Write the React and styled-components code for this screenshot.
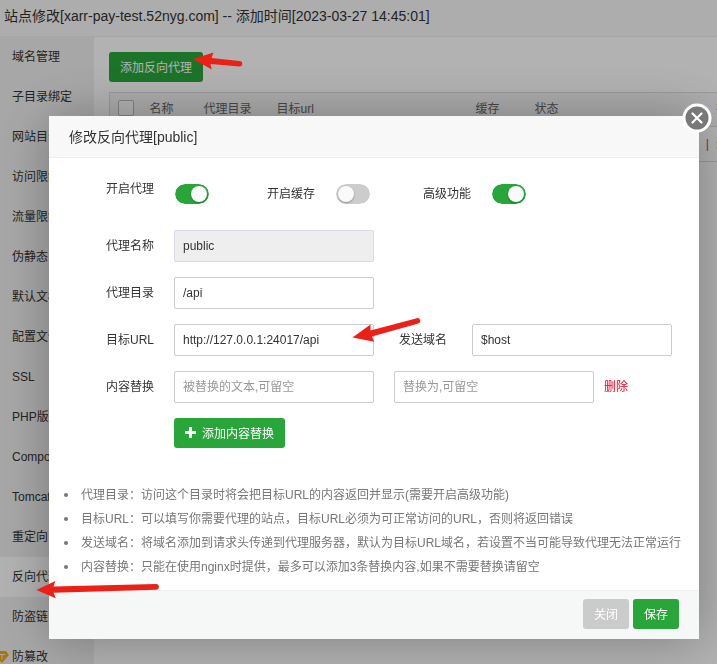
import React, { useState } from 'react';
import styled, { createGlobalStyle } from 'styled-components';

const menuItems = [
  '域名管理',
  '子目录绑定',
  '网站目录',
  '访问限制',
  '流量限制',
  '伪静态',
  '默认文档',
  '配置文件',
  'SSL',
  'PHP版本',
  'Composer',
  'Tomcat',
  '重定向',
  '反向代理',
  '防盗链',
  '防篡改',
];

const notes = [
  '代理目录：访问这个目录时将会把目标URL的内容返回并显示(需要开启高级功能)',
  '目标URL：可以填写你需要代理的站点，目标URL必须为可正常访问的URL，否则将返回错误',
  '发送域名：将域名添加到请求头传递到代理服务器，默认为目标URL域名，若设置不当可能导致代理无法正常运行',
  '内容替换：只能在使用nginx时提供，最多可以添加3条替换内容,如果不需要替换请留空',
];

function Sidebar() {
  return (
    <Menu>
      {menuItems.map((item) => (
        <MenuLink key={item} href="#site" $active={item === '反向代理'}>
          {item === '防篡改' && (
            <ProIcon viewBox="0 0 14 12" aria-hidden="true">
              <path d="M3 0h8l3 4-7 8-7-8z" fill="#f7a90a" />
              <path d="M4 3.500h6M7 3.500v5" fill="none" stroke="#f0f0f0" strokeWidth="1" />
            </ProIcon>
          )}
          {item}
        </MenuLink>
      ))}
    </Menu>
  );
}

function ProxyTable() {
  return (
    <TableWrap>
      <Table>
        <colgroup>
          <col width="32" />
          <col width="54" />
          <col width="73" />
          <col width="199" />
          <col width="59" />
          <col width="60" />
          <col />
        </colgroup>
        <thead>
          <tr>
            <th><RowCheck type="checkbox" aria-label="全选" /></th>
            <th>名称</th>
            <th>代理目录</th>
            <th>目标url</th>
            <th>缓存</th>
            <th>状态</th>
            <th>操作</th>
          </tr>
        </thead>
        <tbody>
          <tr>
            <td><RowCheck type="checkbox" aria-label="public" /></td>
            <td>public</td>
            <td>/api</td>
            <td>http://127.0.0.1:24017/api</td>
            <td>已关闭</td>
            <td>运行中</td>
            <td>
              <RowActions>
                <a href="#edit">编辑</a>
                <span>|</span>
                <a href="#delete">删除</a>
              </RowActions>
            </td>
          </tr>
        </tbody>
      </Table>
    </TableWrap>
  );
}

function ProxyDialog() {
  const [enabled, setEnabled] = useState(true);
  const [cache, setCache] = useState(false);
  const [advanced, setAdvanced] = useState(true);

  return (
    <Dialog role="dialog" aria-labelledby="dialog-title">
      <DialogTitle id="dialog-title">修改反向代理[public]</DialogTitle>
      <CloseButton type="button" aria-label="关闭窗口">
        <svg viewBox="0 0 30 30" width="30" height="30">
          <circle cx="15" cy="15" r="13" fill="#787878" stroke="#fff" strokeWidth="3" />
          <path d="M10.500 10.500l9 9M19.500 10.500l-9 9" stroke="#fff" strokeWidth="2.200" strokeLinecap="round" />
        </svg>
      </CloseButton>

      <Form>
        <SwitchRow>
          <FirstLabel htmlFor="enabled">开启代理</FirstLabel>
          <Switch id="enabled" type="checkbox" checked={enabled} onChange={() => setEnabled(!enabled)} />
          <SwitchLabel htmlFor="cache" $before={57}>开启缓存</SwitchLabel>
          <Switch id="cache" type="checkbox" checked={cache} onChange={() => setCache(!cache)} />
          <SwitchLabel htmlFor="advanced" $before={52}>高级功能</SwitchLabel>
          <Switch id="advanced" type="checkbox" checked={advanced} onChange={() => setAdvanced(!advanced)} />
        </SwitchRow>
        <Row>
          <Label htmlFor="name">代理名称</Label>
          <Input id="name" defaultValue="public" disabled />
        </Row>
        <Row>
          <Label htmlFor="dir">代理目录</Label>
          <Input id="dir" defaultValue="/api" />
        </Row>
        <Row>
          <Label htmlFor="target">目标URL</Label>
          <Input id="target" defaultValue="http://127.0.0.1:24017/api" />
          <HostLabel htmlFor="host">发送域名</HostLabel>
          <Input id="host" defaultValue="$host" />
        </Row>
        <Row>
          <Label htmlFor="sub-from">内容替换</Label>
          <ReplaceFields>
            <Input id="sub-from" placeholder="被替换的文本,可留空" />
            <Input aria-label="替换为" placeholder="替换为,可留空" />
          </ReplaceFields>
          <RemoveLink href="#remove">删除</RemoveLink>
        </Row>
        <AddRow>
          <Button type="button">
            <svg viewBox="0 0 11 11" width="11" height="11" aria-hidden="true">
              <path d="M5.500 0v11M0 5.500h11" stroke="#fff" strokeWidth="3" />
            </svg>
            添加内容替换
          </Button>
        </AddRow>
      </Form>

      <Notes>
        {notes.map((note) => <li key={note}>{note}</li>)}
      </Notes>

      <DialogFooter>
        <Button type="button" $muted>关闭</Button>
        <Button type="button">保存</Button>
      </DialogFooter>
    </Dialog>
  );
}

export default function App() {
  return (
    <>
      <GlobalStyle />
      <Page>
        <TitleBar>站点修改[xarr-pay-test.52nyg.com] -- 添加时间[2023-03-27 14:45:01]</TitleBar>
        <Content>
          <Sidebar />
          <Main>
            <Button type="button">添加反向代理</Button>
            <ProxyTable />
          </Main>
        </Content>
      </Page>
      <Shade>
        <ProxyDialog />
      </Shade>
      <Arrows viewBox="0 0 717 664" width="717" height="664" aria-hidden="true">
        <path d="M193 59 213.500 52.500 211.500 58 239.500 61A2.600 2.600 0 0 1 239.500 66.500L210.500 64 211.700 69.500z" />
        <path d="M352.500 337.500 370.500 324.500 370.500 330.500 416.800 318.200A2.600 2.600 0 0 1 418.300 323.400L372 336.500 374 341.800z" />
        <path d="M36.300 590 55.300 581 53.500 586.500 156 584A2.800 2.800 0 0 1 156 589.700L53.500 592.800 55.800 598.200z" />
      </Arrows>
    </>
  );
}

const GlobalStyle = createGlobalStyle`
  * {
    box-sizing: border-box;
  }

  body {
    margin: 0;
    overflow: hidden;
  }

  body, button, input {
    color: #333;
    font-family: "Liberation Sans", "Noto Sans CJK SC", sans-serif;
    font-size: 12px;
  }
`;

const Page = styled.div`
  display: flex;
  flex-direction: column;
  height: 100vh;
  overflow: hidden;
  background: #fff;
`;

const TitleBar = styled.header`
  flex: none;
  padding: 0 4px 3px;
  border-bottom: 1px solid #eee;
  background: #f8f8f8;
  font-size: 14px;
  line-height: 33px;
  white-space: nowrap;
`;

const Content = styled.div`
  display: flex;
  flex: 1;
  min-height: 0;
`;

const Menu = styled.nav`
  flex: none;
  width: 94px;
  overflow: hidden;
  background: #f0f0f0;
`;

const MenuLink = styled.a`
  position: relative;
  display: block;
  padding-left: 12px;
  background: ${({ $active }) => ($active ? '#fff' : 'transparent')};
  color: #333;
  line-height: 40px;
  text-decoration: none;
  white-space: nowrap;
`;

const ProIcon = styled.svg`
  position: absolute;
  top: 14px;
  left: -5px;
  width: 14px;
  height: 12px;
`;

const Main = styled.main`
  flex: 1;
  min-width: 0;
  padding: 15px 0 0 15px;
`;

const Button = styled.button`
  display: inline-flex;
  align-items: center;
  gap: 6px;
  height: 30px;
  padding: 0 11px 2px;
  border: 0;
  border-radius: 3px;
  background: ${({ $muted }) => ($muted ? '#cbcbcb' : '#29a63a')};
  color: #fff;
  cursor: pointer;
`;

const TableWrap = styled.div`
  margin-top: 10px;
  overflow: hidden;
`;

const Table = styled.table`
  width: 100%;
  min-width: 640px;
  border: 1px solid #ddd;
  border-collapse: collapse;
  table-layout: fixed;
  color: #666;

  th, td {
    height: 35px;
    padding: 0 8px;
    border-bottom: 1px solid #ddd;
    font-weight: normal;
    text-align: left;
    white-space: nowrap;
    overflow: hidden;
  }

  th {
    height: 34px;
    padding-bottom: 4px;
    background: #f6f6f6;
  }

  th:last-child {
    text-align: right;
  }

  a {
    color: #20a53a;
    text-decoration: none;
  }
`;

const RowActions = styled.div`
  display: flex;
  justify-content: flex-end;
  gap: 7px;
  line-height: 16px;
`;

const RowCheck = styled.input`
  display: block;
  appearance: none;
  width: 16px;
  height: 16px;
  margin: 0;
  border: 1px solid #bbb;
  border-radius: 2px;
  background: #fff;
`;

const Shade = styled.div`
  position: fixed;
  inset: 0;
  display: flex;
  align-items: flex-start;
  padding: 116px 18px 25px 49px;
  background: rgba(0, 0, 0, 0.3);
`;

const Dialog = styled.section`
  position: relative;
  flex: 1;
  min-width: 0;
  background: #fff;
  box-shadow: 1px 1px 50px rgba(0, 0, 0, 0.3);
`;

const DialogTitle = styled.h2`
  margin: 0;
  padding: 1px 20px 0;
  border-bottom: 1px solid #eee;
  background: #f8f8f8;
  font-size: 14px;
  font-weight: normal;
  line-height: 40px;
`;

const CloseButton = styled.button`
  position: absolute;
  top: -13px;
  right: -13px;
  width: 30px;
  height: 30px;
  padding: 0;
  border: 0;
  background: none;
  cursor: pointer;

  svg {
    display: block;
  }
`;

const Form = styled.form`
  display: flex;
  flex-direction: column;
  gap: 15px;
  padding-top: 20px;
`;

const Row = styled.div`
  display: flex;
  align-items: center;
  min-height: 32px;

  label, a {
    line-height: 20px;
  }
`;

const SwitchRow = styled(Row)`
  margin-bottom: 5px;
`;

const Label = styled.label`
  flex: none;
  width: 105px;
  margin-right: 20px;
  text-align: right;
`;

const FirstLabel = styled(Label)`
  align-self: flex-start;
  padding-top: 1px;
`;

const SwitchLabel = styled.label`
  margin-right: 20px;
  margin-left: ${({ $before }) => $before}px;
`;

const HostLabel = styled.label`
  margin: 0 25px;
`;

const Switch = styled.input`
  appearance: none;
  width: 36px;
  height: 22px;
  margin: 0;
  padding: 2px;
  border: 1px solid #fff;
  border-radius: 11px;
  background: ${({ checked }) => (checked ? '#29a63a' : '#ccc')};
  background-clip: padding-box;
  cursor: pointer;

  &::before {
    display: block;
    width: 16px;
    height: 16px;
    margin-left: ${({ checked }) => (checked ? 'auto' : '0')};
    border-radius: 50%;
    background: #fafafa;
    box-shadow: 0 1px 2px rgba(0, 0, 0, 0.3);
    content: "";
  }
`;

const Input = styled.input`
  width: 200px;
  height: 32px;
  padding: 0 8px;
  border: 1px solid #ccc;
  border-radius: 2px;
  background: #fff;

  &::placeholder {
    color: #999;
  }

  &:disabled {
    border-color: #dcdaea;
    background: #eee;
  }
`;

const ReplaceFields = styled.div`
  display: flex;
  gap: 20px;
`;

const RemoveLink = styled.a`
  margin-left: 10px;
  color: #f00020;
  text-decoration: none;
`;

const AddRow = styled.div`
  padding-left: 125px;
  line-height: 0;
`;

const Notes = styled.ul`
  margin: 35px 0 0;
  padding: 0 15px 11px;
  color: #777;
  line-height: 24px;
  list-style: none;

  li {
    display: flex;
    align-items: center;
    gap: 13px;
    white-space: nowrap;
  }

  li::before {
    width: 4px;
    height: 4px;
    border-radius: 50%;
    background: #777;
    content: "";
  }
`;

const DialogFooter = styled.footer`
  display: flex;
  justify-content: flex-end;
  gap: 4px;
  padding: 8px 20px 10px;
  border-top: 1px solid #edf1f2;
  background: #f6f8f8;
`;

const Arrows = styled.svg`
  position: fixed;
  top: 0;
  left: 0;
  fill: #eb2117;
  pointer-events: none;
`;
